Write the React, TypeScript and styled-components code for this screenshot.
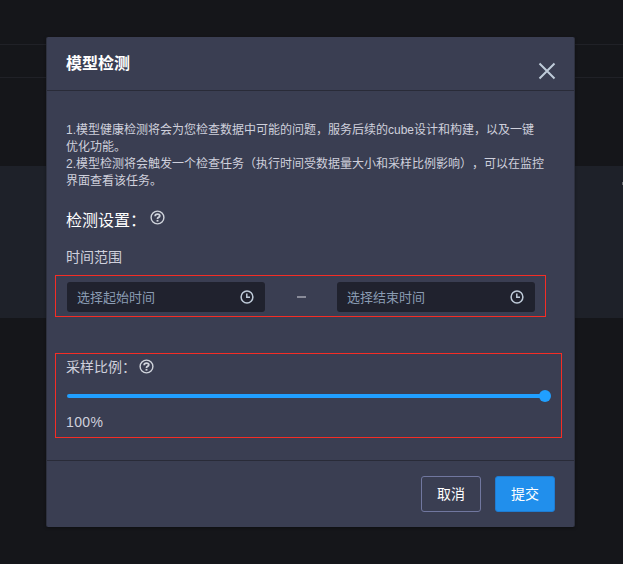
import React from "react";
import styled, { createGlobalStyle } from "styled-components";

const GlobalStyle = createGlobalStyle`
  * { box-sizing: border-box; }
  body { margin: 0; background: #15161a; overflow: hidden; }
  button, input { font-family: inherit; }
`;

const Page = styled.div`
  display: grid;
  width: 623px;
  height: 564px;
  background: #15161a;
  font-family: "Liberation Sans", "Noto Sans CJK SC", sans-serif;
`;

const Backdrop = styled.div`
  grid-area: 1 / 1;
  display: grid;
  grid-template-rows: 44px 34px 88px 152px 246px;
`;

const Band = styled.div<{ $lined?: boolean; $raised?: boolean }>`
  display: flex;
  justify-content: flex-end;
  background: ${(p) => (p.$raised ? "#1e2129" : "transparent")};
  border: 0 solid #202127;
  border-width: ${(p) => (p.$lined ? "1px 0" : "0")};
`;

const EdgeMark = styled.span`
  width: 1px;
  height: 3px;
  margin-top: 16px;
  background: #66686e;
`;

const Dialog = styled.section`
  grid-area: 1 / 1;
  z-index: 1;
  display: flex;
  flex-direction: column;
  width: 529px;
  height: 490px;
  margin: 37px 0 0 46px;
  border: 0 solid #2d303e;
  border-width: 0 1px;
  border-radius: 2px;
  background: #3a3e52;
  box-shadow: 0 1px 3px rgba(0, 0, 0, 0.35);
`;

const Header = styled.header`
  display: flex;
  justify-content: space-between;
  height: 54px;
  padding: 0 18px 0 19px;
  border-bottom: 1px solid #292b38;
`;

const Title = styled.h1`
  margin: 0;
  color: #fff;
  font-size: 16px;
  line-height: 54px;
  font-weight: 700;
`;

const Close = styled.button`
  width: 18px;
  height: 18px;
  margin-top: 25px;
  padding: 0;
  border: 0;
  background: none;
  svg { display: block; }
`;

const Body = styled.div`
  height: 369px;
  padding: 31px 0 0 8px;
`;

const Notes = styled.div`
  height: 68px;
  padding-left: 11px;
  color: #cfd0dc;
  font-size: 12px;
  line-height: 17px;
  white-space: nowrap;
  text-spacing-trim: space-all;
  p { margin: 0; }
`;

const SectionTitle = styled.h2`
  display: flex;
  align-items: center;
  height: 24px;
  margin: 17px 0 0;
  padding-left: 11px;
  color: #fff;
  font-size: 16px;
  font-weight: 400;
  svg { margin: 0 0 3px 4px; }
`;

const Label = styled.div`
  display: flex;
  align-items: center;
  height: 20px;
  color: #cfd0dc;
  font-size: 14px;
`;

const RangeLabel = styled(Label)`
  margin-top: 15px;
  padding-left: 11px;
`;

const RangeRow = styled.div`
  display: flex;
  align-items: center;
  width: 491px;
  height: 42px;
  margin-top: 9px;
  padding-left: 11px;
  border: 1px solid #f52d25;
`;

const Picker = styled.div`
  display: flex;
  align-items: center;
  justify-content: space-between;
  width: 198px;
  height: 30px;
  margin-top: 2px;
  padding: 0 11px 0 10px;
  border-radius: 3px;
  background: #20222e;
  color: #8a9cb3;
  font-size: 13px;
`;

const Placeholder = styled.span`
  padding-bottom: 2px;
`;

const Dash = styled.span`
  width: 9px;
  height: 2px;
  margin: 1px 31px 0 32px;
  background: #898b99;
`;

const RatioPanel = styled.div`
  width: 507px;
  height: 85px;
  margin-top: 36px;
  padding: 2px 10px 0;
  border: 1px solid #f52d25;
  svg { margin-left: 3px; }
`;

const Percent = styled(Label)`
  letter-spacing: 0.35px;
`;

const Track = styled.div`
  display: flex;
  align-items: center;
  justify-content: flex-end;
  width: 478px;
  height: 4px;
  margin: 18px 0 14px 1px;
  border-radius: 2px;
  background: #209fff;
`;

const Thumb = styled.span`
  flex: none;
  width: 12px;
  height: 12px;
  margin-right: -6px;
  border-radius: 50%;
  background: #209fff;
`;

const Footer = styled.footer`
  display: flex;
  justify-content: flex-end;
  gap: 14px;
  height: 67px;
  padding: 15px 19px 0 0;
  border-top: 1px solid #292b38;
`;

const Button = styled.button<{ $primary?: boolean }>`
  width: 60px;
  height: 36px;
  padding: 0 0 2px;
  border: 1px solid ${(p) => (p.$primary ? "#1f7cd2" : "#71779f")};
  border-radius: 3px;
  background: ${(p) => (p.$primary ? "#218fec" : "transparent")};
  color: #fff;
  font-size: 14px;
`;

const HelpIcon = () => (
  <svg width="15" height="15" viewBox="0 0 15 15" fill="none" stroke="#d0d4dc">
    <circle cx="7.5" cy="7.5" r="6.4" strokeWidth="1.4" />
    <path d="M5.2 6.2V5.9Q5.2 4.1 7.5 4.1T9.8 5.8Q9.8 6.8 8.6 7.3Q7.5 7.8 7.5 9" strokeWidth="1.8" />
    <path d="M7.5 9.9v1.7" strokeWidth="1.9" />
  </svg>
);

const ClockIcon = () => (
  <svg width="14" height="14" viewBox="0 0 14 14" fill="none" stroke="#bfcbd9" strokeWidth="1.5">
    <circle cx="7" cy="7" r="5.9" />
    <path d="M6.8 3.5V7.2H10" />
  </svg>
);

export default function App() {
  return (
    <>
      <GlobalStyle />
      <Page>
        <Backdrop>
          <Band />
          <Band $lined />
          <Band />
          <Band $raised><EdgeMark /></Band>
          <Band />
        </Backdrop>
        <Dialog role="dialog" aria-label="模型检测">
          <Header>
            <Title>模型检测</Title>
            <Close aria-label="关闭">
              <svg width="18" height="18" fill="none" stroke="#bfcbd9" strokeWidth="2">
                <path d="M1.5 1.5l15 15M16.5 1.5l-15 15" />
              </svg>
            </Close>
          </Header>
          <Body>
            <Notes>
              <p>1.模型健康检测将会为您检查数据中可能的问题，服务后续的cube设计和构建，以及一键</p>
              <p>优化功能。</p>
              <p>2.模型检测将会触发一个检查任务（执行时间受数据量大小和采样比例影响），可以在监控</p>
              <p>界面查看该任务。</p>
            </Notes>
            <SectionTitle>检测设置：<HelpIcon /></SectionTitle>
            <RangeLabel>时间范围</RangeLabel>
            <RangeRow>
              <Picker><Placeholder>选择起始时间</Placeholder><ClockIcon /></Picker>
              <Dash />
              <Picker><Placeholder>选择结束时间</Placeholder><ClockIcon /></Picker>
            </RangeRow>
            <RatioPanel>
              <Label>采样比例：<HelpIcon /></Label>
              <Track><Thumb /></Track>
              <Percent>100%</Percent>
            </RatioPanel>
          </Body>
          <Footer>
            <Button>取消</Button>
            <Button $primary>提交</Button>
          </Footer>
        </Dialog>
      </Page>
    </>
  );
}
